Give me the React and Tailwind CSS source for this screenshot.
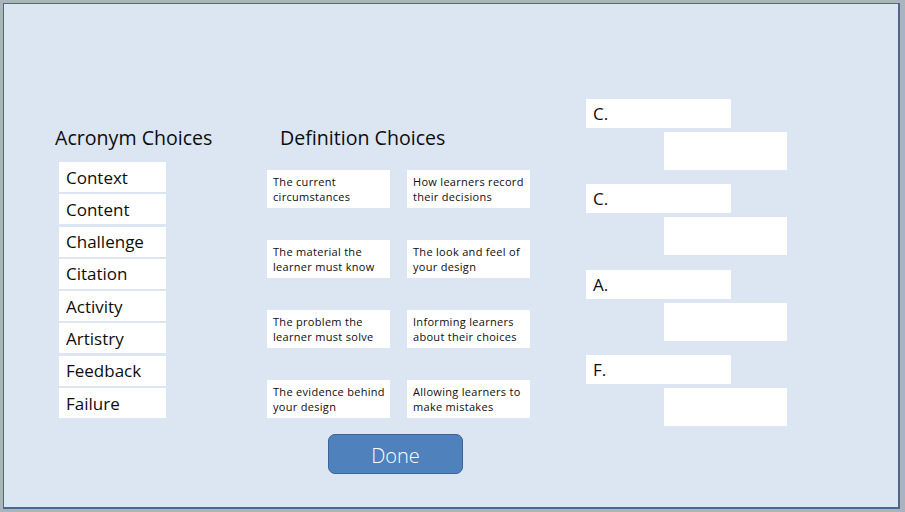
import React from 'react';

const acronyms = ['Context', 'Content', 'Challenge', 'Citation', 'Activity', 'Artistry', 'Feedback', 'Failure'];

const definitions = [
  ['The current', 'circumstances'],
  ['How learners record', 'their decisions'],
  ['The material the', 'learner must know'],
  ['The look and feel of', 'your design'],
  ['The problem the', 'learner must solve'],
  ['Informing learners', 'about their choices'],
  ['The evidence behind', 'your design'],
  ['Allowing learners to', 'make mistakes'],
];

const answers = ['C.', 'C.', 'A.', 'F.'];

export default function App() {
  return (
    <div
      className="w-[905px] h-[512px] bg-[#abb4bd] pl-[3px] pt-[3px] overflow-hidden"
      style={{ fontFamily: '"Open Sans", "Liberation Sans", sans-serif' }}
    >
      <div className="w-[897px] h-[506px] bg-[#dce6f2] border-l border-t border-r-2 border-b-2 border-[#4a6890] flex items-start text-[#0d0d0d]">
        {/* Acronym column */}
        <div className="ml-[51px] mt-[120px] w-[111px] flex flex-col">
          <h2 className="text-[19.6px] leading-[28px] mb-[10px] whitespace-nowrap">Acronym Choices</h2>
          <div className="ml-[4px] flex flex-col gap-[2.3px]">
            {acronyms.map((a) => (
              <div key={a} className="w-[107px] h-[30px] bg-white flex items-center pl-[7px] text-[17px] leading-none">
                {a}
              </div>
            ))}
          </div>
        </div>

        {/* Definition column */}
        <div className="ml-[101px] mt-[120px] w-[263px] flex flex-col">
          <h2 className="pl-[13px] text-[19.6px] leading-[28px] mb-[18px] whitespace-nowrap">Definition Choices</h2>
          <div className="grid grid-cols-[123px_123px] gap-x-[17px] gap-y-[32px]">
            {definitions.map((d, i) => (
              <div key={i} className="h-[38px] bg-white pl-[6px] pt-[4px] text-[11px] leading-[15px] tracking-[0.3px] whitespace-nowrap">
                <div>{d[0]}</div>
                <div>{d[1]}</div>
              </div>
            ))}
          </div>
          <button className="mt-[16px] ml-[61px] w-[135px] h-[40px] pt-[3px] rounded-[7px] bg-[#4f81bd] border border-[#3c6494] text-white text-[20px] font-light leading-none">
            Done
          </button>
        </div>

        {/* Answer column */}
        <div className="ml-[56px] mt-[95px] w-[201px] flex flex-col gap-[14.3px]">
          {answers.map((a, i) => (
            <div key={i} className="flex flex-col">
              <div className="w-[145px] h-[29px] bg-white flex items-center pl-[7px] text-[17px] leading-none">{a}</div>
              <div className="mt-[4px] ml-[78px] w-[123px] h-[38px] bg-white" />
            </div>
          ))}
        </div>
      </div>
    </div>
  );
}
